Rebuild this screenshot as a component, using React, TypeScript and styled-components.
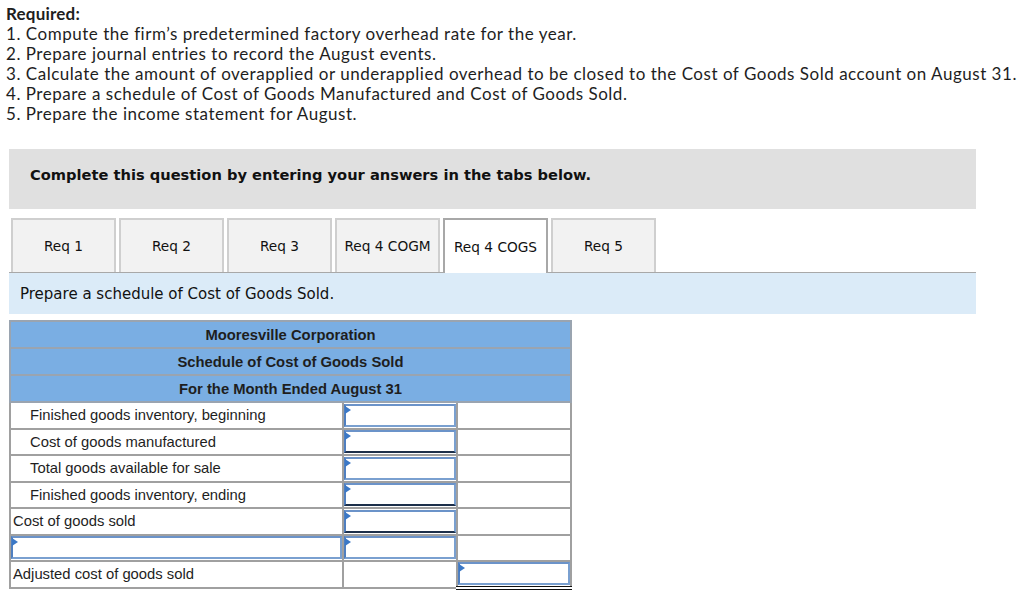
import React from "react";
import styled, { createGlobalStyle, css } from "styled-components";

const Global = createGlobalStyle`
  html, body { margin: 0; padding: 0; background: #fff; }
  body { font-family: "Lato", "Open Sans", sans-serif; color: #222; }
  * { box-sizing: border-box; }
`;

const Page = styled.div`
  width: 1024px;
  height: 595px;
  overflow: hidden;
  padding: 4px 0 0 0;
`;

const Required = styled.div`
  padding-left: 6px;
  font-family: "Lato", "Open Sans", sans-serif;
  font-size: 17px;
  letter-spacing: 0.52px;
  line-height: 20px;
  color: #1e1e1e;
  white-space: nowrap;
`;

const ReqTitle = styled.div`
  font-weight: 700;
  letter-spacing: 0.2px;
`;

const Instruction = styled.div`
  margin: 25px 0 0 9px;
  width: 967px;
  height: 60px;
  background: #e0e0e0;
  display: flex;
  align-items: center;
  padding: 0 0 10px 21px;
  font-family: "DejaVu Sans", Verdana, sans-serif;
  font-weight: 700;
  font-size: 14.65px;
  color: #111;
`;

const TabRow = styled.div`
  margin: 9px 0 0 9px;
  width: 967px;
  display: flex;
  gap: 3px;
  padding-left: 2px;
  border-bottom: 1px solid #a8a8a8;
`;

const Tab = styled.div<{ $active?: boolean }>`
  width: 105px;
  height: 54px;
  display: flex;
  align-items: center;
  justify-content: center;
  font-family: "DejaVu Sans", Verdana, sans-serif;
  font-size: 13.7px;
  color: #111;
  background: #f2f2f2;
  border: 2px solid #cfcfcf;
  border-bottom: none;
  ${(p) =>
    p.$active &&
    css`
      background: #fff;
      border-color: #a8a8a8;
      margin-bottom: -1px;
      height: 55px;
    `}
`;

const Band = styled.div`
  margin-left: 9px;
  width: 967px;
  height: 41px;
  background: #dbebf8;
  display: flex;
  align-items: center;
  padding-left: 11px;
  font-family: "DejaVu Sans", Verdana, sans-serif;
  font-size: 15px;
  color: #111;
`;

const Table = styled.table`
  margin: 6px 0 0 9px;
  width: 563px;
  border-collapse: collapse;
  font-family: "Liberation Sans", Arial, sans-serif;
  font-size: 14.8px;
  color: #1e1e1e;
`;

const HeadCell = styled.td`
  background: #7aaee3;
  border: 2px solid #9aa4b0;
  height: 27px;
  text-align: center;
  font-weight: 700;
  padding: 0;
`;

const LabelCell = styled.td<{ $indent?: boolean }>`
  width: 334px;
  height: 26.5px;
  border: 2px solid #a0a0a0;
  padding: 0 0 0 ${(p) => (p.$indent ? 19 : 2)}px;
`;

const ValueCell = styled.td<{ $top?: boolean; $double?: boolean }>`
  width: 114px;
  height: 26.5px;
  border: 2px solid #a0a0a0;
  padding: 0;
  ${(p) => p.$top && css`border-top: 2px solid #111;`}
  ${(p) =>
    p.$double &&
    css`
      border-bottom: 4px double #111;
    `}
`;

const InputBox = styled.div<{ $underline?: boolean }>`
  position: relative;
  height: 23px;
  width: 100%;
  background: #fff;
  border: 2px solid #7aa0d0;
  border-left-color: #4f7fc0;
  border-top-color: #6b93c9;
  ${(p) => p.$underline && css`border-bottom: 2px solid #1c2f4a;`}
  &::before {
    content: "";
    position: absolute;
    left: -1px;
    top: 0;
    border-left: 6px solid #3b78c6;
    border-top: 4px solid transparent;
    border-bottom: 4px solid transparent;
  }
`;

const tabs = ["Req 1", "Req 2", "Req 3", "Req 4 COGM", "Req 4 COGS", "Req 5"];

export default function App() {
  return (
    <Page>
      <Global />
      <Required>
        <ReqTitle>Required:</ReqTitle>
        <div>1. Compute the firm’s predetermined factory overhead rate for the year.</div>
        <div>2. Prepare journal entries to record the August events.</div>
        <div>
          3. Calculate the amount of overapplied or underapplied overhead to be closed to the Cost of Goods Sold account on August 31.
        </div>
        <div>4. Prepare a schedule of Cost of Goods Manufactured and Cost of Goods Sold.</div>
        <div>5. Prepare the income statement for August.</div>
      </Required>
      <Instruction>Complete this question by entering your answers in the tabs below.</Instruction>
      <TabRow>
        {tabs.map((t) => (
          <Tab key={t} $active={t === "Req 4 COGS"}>
            {t}
          </Tab>
        ))}
      </TabRow>
      <Band>Prepare a schedule of Cost of Goods Sold.</Band>
      <Table>
        <tbody>
          <tr>
            <HeadCell colSpan={3}>Mooresville Corporation</HeadCell>
          </tr>
          <tr>
            <HeadCell colSpan={3}>Schedule of Cost of Goods Sold</HeadCell>
          </tr>
          <tr>
            <HeadCell colSpan={3}>For the Month Ended August 31</HeadCell>
          </tr>
          <tr>
            <LabelCell $indent>Finished goods inventory, beginning</LabelCell>
            <ValueCell>
              <InputBox />
            </ValueCell>
            <ValueCell />
          </tr>
          <tr>
            <LabelCell $indent>Cost of goods manufactured</LabelCell>
            <ValueCell>
              <InputBox $underline />
            </ValueCell>
            <ValueCell />
          </tr>
          <tr>
            <LabelCell $indent>Total goods available for sale</LabelCell>
            <ValueCell>
              <InputBox />
            </ValueCell>
            <ValueCell />
          </tr>
          <tr>
            <LabelCell $indent>Finished goods inventory, ending</LabelCell>
            <ValueCell>
              <InputBox $underline />
            </ValueCell>
            <ValueCell />
          </tr>
          <tr>
            <LabelCell>Cost of goods sold</LabelCell>
            <ValueCell>
              <InputBox $underline />
            </ValueCell>
            <ValueCell />
          </tr>
          <tr>
            <LabelCell style={{ padding: 0 }}>
              <InputBox />
            </LabelCell>
            <ValueCell>
              <InputBox />
            </ValueCell>
            <ValueCell />
          </tr>
          <tr>
            <LabelCell>Adjusted cost of goods sold</LabelCell>
            <ValueCell $top />
            <ValueCell $double>
              <InputBox />
            </ValueCell>
          </tr>
        </tbody>
      </Table>
    </Page>
  );
}
